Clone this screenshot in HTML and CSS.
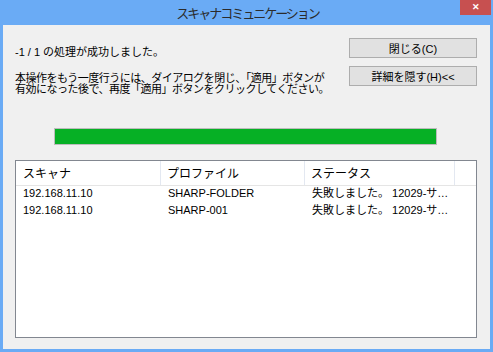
FILE: index.html
```
<!DOCTYPE html>
<html lang="ja">
<head>
    <meta charset="UTF-8">
    <meta name="viewport" content="width=device-width, initial-scale=1.0">
    <title>スキャナコミュニケーション</title>
    <link rel="stylesheet" href="styles.css">
</head>
<body>

    <div class="window">
        <div class="titlebar">
            <span class="title">スキャナコミュニケーション</span>
            <div class="close-btn">&#x2715;</div>
        </div>

        <div class="client">
            <div class="top">
                <div class="message">
                    <p class="status">-1 / 1 の処理が成功しました。</p>
                    <p class="note">本操作をもう一度行うには、ダイアログを閉じ、「適用」ボタンが<br>有効になった後で、再度「適用」ボタンをクリックしてください。</p>
                </div>
                <div class="actions">
                    <button class="btn">閉じる(C)</button>
                    <button class="btn">詳細を隠す(H)&lt;&lt;</button>
                </div>
            </div>

            <div class="progress">
                <div class="progress-fill" style="width: 100%;"></div>
            </div>

            <div class="list">
                <div class="list-head">
                    <div class="head-cell">スキャナ</div>
                    <div class="head-cell">プロファイル</div>
                    <div class="head-cell">ステータス</div>
                    <div class="head-cell"></div>
                </div>
                <div class="list-row">
                    <div class="cell">192.168.11.10</div>
                    <div class="cell">SHARP-FOLDER</div>
                    <div class="cell">失敗しました。 12029-サ…</div>
                </div>
                <div class="list-row">
                    <div class="cell">192.168.11.10</div>
                    <div class="cell">SHARP-001</div>
                    <div class="cell">失敗しました。 12029-サ…</div>
                </div>
            </div>
        </div>
    </div>

</body>
</html>
```

FILE: styles.css
```
body {
    margin: 0;
    font-family: "Liberation Sans", "Noto Sans CJK JP", sans-serif;
    font-size: 11px;
    color: #000;
}

.window {
    width: 493px;
    height: 352px;
    background-color: #6aabf5;
    display: flex;
    flex-direction: column;
    position: relative;
}

.titlebar {
    height: 25px;
    display: flex;
    align-items: center;
    justify-content: center;
}

.title {
    font-family: "Noto Sans CJK JP", sans-serif;
    font-size: 13px;
    letter-spacing: -2px;
    color: #2b2b2b;
    margin-left: 2px;
}

.close-btn {
    position: absolute;
    top: 0;
    right: 2px;
    width: 31px;
    height: 15px;
    background-color: #c75050;
    color: #fff;
    font-size: 9px;
    font-weight: bold;
    line-height: 15px;
    text-align: center;
}

.client {
    flex: 1;
    margin: 0 3px 3px 3px;
    background-color: #f0f0f0;
    padding: 13px 13px 11px 12px;
}

.top {
    display: flex;
    justify-content: space-between;
}

.message p {
    margin: 0;
}

.status {
    margin-top: 8px !important;
    line-height: 12px;
}

.note {
    margin-top: 15px !important;
    line-height: 11px;
    letter-spacing: -0.5px;
}

.actions {
    display: flex;
    flex-direction: column;
    gap: 8px;
}

.btn {
    width: 128px;
    height: 20px;
    padding: 0;
    background-color: #e1e1e1;
    border: 1px solid #adadad;
    font-family: "Liberation Sans", "Noto Sans CJK JP", sans-serif;
    font-size: 11px;
    color: #000;
}

.progress {
    width: 381px;
    height: 15px;
    margin: 33px 0 0 39px;
    border: 1px solid #bcbcbc;
    background-color: #e6e6e6;
}

.progress-fill {
    height: 100%;
    background-color: #06b025;
}

.list {
    height: 176px;
    margin-top: 15px;
    border: 1px solid #828790;
    background-color: #fff;
}

.list-head,
.list-row {
    display: grid;
    grid-template-columns: 145px 144px 150px 1fr;
}

.list-head {
    height: 24px;
    border-bottom: 1px solid #e5e5e5;
    font-family: "Noto Sans CJK JP", sans-serif;
    font-size: 12px;
}

.head-cell {
    border-right: 1px solid #e3e8f1;
    padding-left: 7px;
    line-height: 24px;
}

.head-cell:nth-child(n+2) {
    padding-left: 6px;
}

.head-cell:last-child {
    border-right: none;
}

.list-row {
    height: 17px;
    line-height: 15px;
}

.cell {
    padding-left: 7px;
    white-space: nowrap;
}
```
